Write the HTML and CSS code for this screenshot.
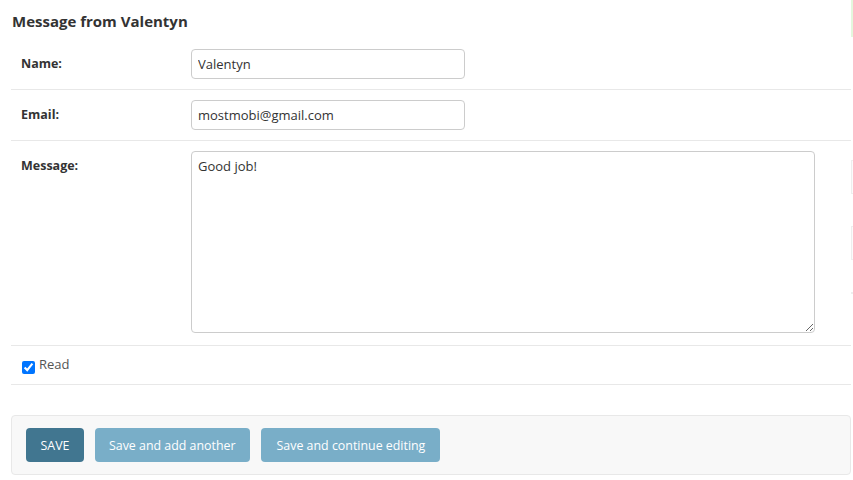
FILE: index.html
```html
<!DOCTYPE html>
<html>
<head>
<meta charset="utf-8">
<link rel="stylesheet" href="styles.css">
</head>
<body>
<div class="page">
  <div class="content">
    <h2 class="title">Message from Valentyn</h2>
    <div class="fieldset">
      <div class="form-row">
        <label class="field-label">Name:</label>
        <input class="vtext" type="text" value="Valentyn">
      </div>
      <div class="form-row">
        <label class="field-label">Email:</label>
        <input class="vtext" type="text" value="mostmobi@gmail.com">
      </div>
      <div class="form-row message-row">
        <label class="field-label">Message:</label>
        <textarea class="vlarge">Good job!</textarea>
      </div>
      <div class="form-row check-row">
        <input class="check" type="checkbox" checked>
        <label class="check-label">Read</label>
      </div>
    </div>
    <div class="submit-row">
      <button class="btn btn-default">SAVE</button>
      <button class="btn btn-add">Save and add another</button>
      <button class="btn btn-continue">Save and continue editing</button>
    </div>
  </div>
  <div class="side">
    <div class="side-green"></div>
    <div class="side-box first"></div>
    <div class="side-box"></div>
    <div class="side-dot"></div>
  </div>
</div>
</body>
</html>
```
FILE: styles.css
```css
* { box-sizing: border-box; }
html, body { margin: 0; padding: 0; background: #fff; }
body {
  font-family: "Open Sans", "Noto Sans", sans-serif;
  font-size: 13px;
  color: #333;
  overflow: hidden;
}
.page {
  display: flex;
  width: 853px;
  height: 480px;
}
.content {
  width: 840px;
  margin-left: 11px;
  flex: none;
}
.side {
  flex: 1;
}
.side-green {
  height: 37px;
  background: #e4f7dd;
}
.side-box {
  height: 34px;
  margin-top: 32px;
  background: #fbfbfb;
  border: 1px solid #eee;
  border-right: none;
}
.side-box.first {
  margin-top: 123px;
}
.side-dot {
  width: 2px;
  height: 2px;
  margin-top: 32px;
  background: #eee;
}
.title {
  margin: 0;
  padding: 10px 0 0 1px;
  height: 39px;
  font-size: 15px;
  font-weight: 700;
  color: #333;
  line-height: 22px;
}
.form-row {
  display: flex;
  align-items: flex-start;
  padding: 10px;
  border-bottom: 1px solid #e8e8e8;
}
.message-row {
  padding-bottom: 12px;
}
.field-label {
  width: 170px;
  flex: none;
  font-weight: 700;
  font-size: 12.5px;
  color: #333;
  line-height: 30px;
}
.vtext {
  width: 274px;
  height: 30px;
  border: 1px solid #ccc;
  border-radius: 4px;
  padding: 0 6px;
  font-family: inherit;
  font-size: 13px;
  color: #333;
  margin: 0;
}
.vlarge {
  display: block;
  width: 624px;
  height: 182px;
  border: 1px solid #ccc;
  border-radius: 4px;
  padding: 5px 6px;
  font-family: inherit;
  font-size: 13px;
  color: #333;
  margin: 0;
  resize: both;
}
.check-row {
  align-items: center;
  height: 39px;
  padding: 0 10px 0 11px;
}
.check {
  margin: 5px 4px 0 0;
  width: 13px;
  height: 13px;
}
.check-label {
  font-size: 13px;
  color: #555;
  margin-top: -3px;
}
.submit-row {
  margin-top: 30px;
  display: flex;
  gap: 11px;
  padding: 12px 14px;
  background: #f8f8f8;
  border: 1px solid #e8e8e8;
  border-radius: 4px;
}
.btn {
  height: 34px;
  padding: 0 14px;
  border: none;
  border-radius: 4px;
  background: #79aec8;
  color: #fff;
  font-family: inherit;
  font-size: 12.4px;
}
.btn-continue {
  padding: 0 15px 0 16px;
}
.btn-default {
  background: #417690;
  width: 58px;
  padding: 0;
}
```
